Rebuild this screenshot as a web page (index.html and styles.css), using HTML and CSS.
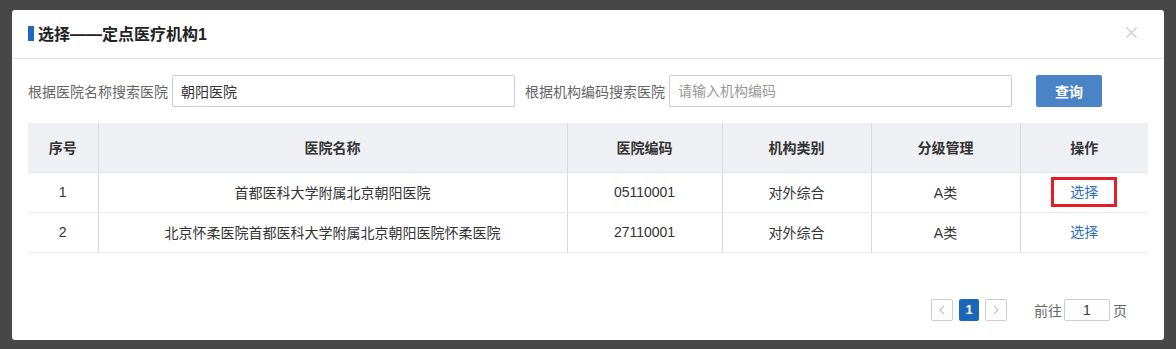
FILE: index.html
```html
<!DOCTYPE html>
<html lang="zh-CN">
<head>
<meta charset="utf-8">
<title>选择——定点医疗机构1</title>
<link rel="stylesheet" href="styles.css">
</head>
<body>
<div class="modal">
  <div class="modal-header">
    <h2 class="modal-title">选择——定点医疗机构1</h2>
    <span class="close">
      <svg width="11" height="11" viewBox="0 0 11 11"><path d="M0.5 0.5L10.5 10.5M10.5 0.5L0.5 10.5" stroke="#c5cdd8" stroke-width="1.3" fill="none"/></svg>
    </span>
  </div>
  <div class="modal-body">
    <div class="search-row">
      <label class="search-label">根据医院名称搜索医院</label>
      <input class="search-input" type="text" value="朝阳医院">
      <label class="search-label second">根据机构编码搜索医院</label>
      <input class="search-input" type="text" placeholder="请输入机构编码">
      <button class="btn-query">查询</button>
    </div>
    <table class="grid">
      <colgroup>
        <col class="c1"><col class="c2"><col class="c3"><col class="c4"><col class="c5"><col class="c6">
      </colgroup>
      <thead>
        <tr><th>序号</th><th>医院名称</th><th>医院编码</th><th>机构类别</th><th>分级管理</th><th>操作</th></tr>
      </thead>
      <tbody>
        <tr><td>1</td><td>首都医科大学附属北京朝阳医院</td><td>05110001</td><td>对外综合</td><td>A类</td><td><a class="pick marked">选择</a></td></tr>
        <tr><td>2</td><td>北京怀柔医院首都医科大学附属北京朝阳医院怀柔医院</td><td>27110001</td><td>对外综合</td><td>A类</td><td><a class="pick">选择</a></td></tr>
      </tbody>
    </table>
    <div class="pager">
      <span class="pg-btn">
        <svg width="6" height="10" viewBox="0 0 6 10"><path d="M5 1L1 5L5 9" stroke="#c0c4cc" stroke-width="1.3" fill="none"/></svg>
      </span>
      <span class="pg-num">1</span>
      <span class="pg-btn">
        <svg width="6" height="10" viewBox="0 0 6 10"><path d="M1 1L5 5L1 9" stroke="#c0c4cc" stroke-width="1.3" fill="none"/></svg>
      </span>
      <span class="pg-goto">前往</span>
      <input class="pg-input" type="text" value="1">
      <span class="pg-unit">页</span>
    </div>
  </div>
</div>
</body>
</html>
```
FILE: styles.css
```css
* { box-sizing: border-box; }
html, body {
  margin: 0;
  padding: 0;
  background: #474747;
  font-family: "Liberation Sans", "Noto Sans CJK SC", sans-serif;
  font-size: 14px;
  color: #333;
}
.modal {
  margin: 10px 0 0 12px;
  width: 1152px;
  height: 330px;
  background: #fff;
  border-radius: 3px;
}
.modal-header {
  height: 49px;
  border-bottom: 1px solid #e5e5e5;
  display: flex;
  align-items: center;
  justify-content: space-between;
  padding: 0 27px 2px 16px;
}
.modal-title {
  margin: 0;
  font-size: 16px;
  font-weight: bold;
  color: #222;
  display: flex;
  align-items: center;
}
.modal-title::before {
  content: "";
  display: inline-block;
  width: 6px;
  height: 15px;
  background: #1f68bf;
  margin-right: 4px;
}
.close { display: flex; margin-top: -2px; }
.modal-body {
  padding: 16px 16px 0 16px;
}
.search-row {
  display: flex;
  align-items: center;
  height: 32px;
}
.search-label {
  color: #666;
  font-size: 14px;
  margin-right: 4px;
  white-space: nowrap;
}
.search-label.second { margin-left: 10px; }
.search-input {
  width: 343px;
  height: 32px;
  border: 1px solid #ccc;
  border-radius: 2px;
  padding: 0 8px;
  font-family: inherit;
  font-size: 14px;
  color: #333;
  outline: none;
}
.search-input::placeholder { color: #999; }
.btn-query {
  margin-left: 24px;
  width: 66px;
  height: 32px;
  border: none;
  border-radius: 2px;
  background: #4a84c6;
  color: #fff;
  font-family: inherit;
  font-size: 14px;
  font-weight: bold;
}
.grid {
  margin-top: 16px;
  width: 1120px;
  border-collapse: collapse;
  table-layout: fixed;
}
.c1 { width: 70px; }
.c2 { width: 469px; }
.c3 { width: 155px; }
.c4 { width: 149px; }
.c5 { width: 149px; }
.c6 { width: 128px; }
.grid th {
  height: 49px;
  background: #eff0f4;
  font-weight: bold;
  color: #333;
  font-size: 14px;
  border-bottom: 1px solid #e3e3e3;
  text-align: center;
}
.grid td {
  height: 40px;
  text-align: center;
  color: #333;
  border-bottom: 1px solid #ebebeb;
}
.grid th + th, .grid td + td { border-left: 1px solid #d9d9d9; }
.pick {
  color: #2f6fbf;
  display: inline-block;
  height: 30px;
  line-height: 24px;
  padding: 0 16px;
  border: 3px solid transparent;
}
.pick.marked { border-color: #e81c24; }
.pager {
  margin-top: 46px;
  display: flex;
  align-items: center;
  justify-content: flex-end;
  padding-right: 21px;
  height: 22px;
}
.pg-btn {
  width: 22px;
  height: 22px;
  border: 1px solid #ccc;
  border-radius: 2px;
  display: flex;
  align-items: center;
  justify-content: center;
}
.pg-num {
  width: 20px;
  height: 22px;
  margin: 0 6px;
  background: #1a66b8;
  color: #fff;
  font-weight: bold;
  font-size: 13px;
  border-radius: 2px;
  display: flex;
  align-items: center;
  justify-content: center;
}
.pg-goto {
  margin-left: 27px;
  color: #666;
}
.pg-input {
  width: 46px;
  height: 22px;
  margin: 0 3px 0 2px;
  border: 1px solid #ccc;
  border-radius: 2px;
  text-align: center;
  font-family: inherit;
  font-size: 14px;
  color: #333;
  padding: 0;
  outline: none;
}
.pg-unit { color: #666; }
```
